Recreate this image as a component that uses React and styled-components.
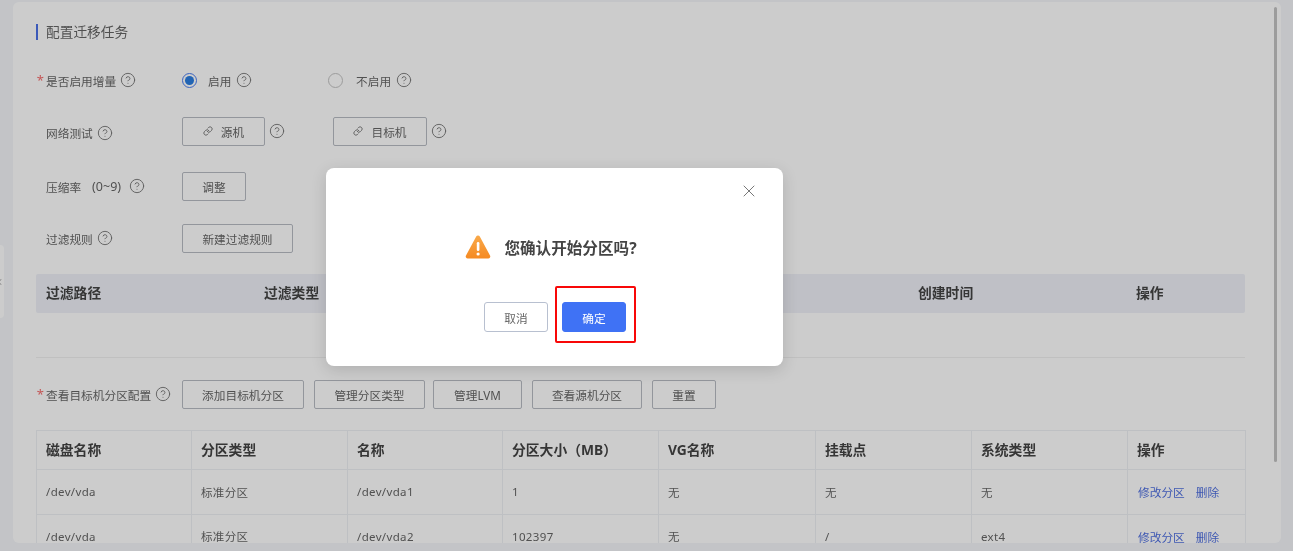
import React from "react";
import styled, { createGlobalStyle } from "styled-components";
import { CircleHelp, Link as LinkIcon, X, ChevronLeft } from "lucide-react";

const Global = createGlobalStyle`
  html, body { margin: 0; padding: 0; height: 100%; overflow: hidden; background: #f4f6f9; }
  body { font-family: "Noto Sans", "Noto Sans CJK SC", sans-serif; font-size: 11.7px; color: #666; }
  * { box-sizing: border-box; }
`;

const Page = styled.div`
  position: relative;
  width: 1293px;
  height: 551px;
  overflow: hidden;
  padding: 2px 12px 8px 13px;
  filter: blur(0.5px);
`;
const Card = styled.main`
  position: relative;
  height: 541px;
  background: #fff;
  border-radius: 6px;
  padding: 22px 36px 0 23px;
  overflow: hidden;
`;
const SideTab = styled.div`
  position: absolute;
  left: 0;
  top: 245px;
  width: 4px;
  height: 73px;
  background: #fff;
  border-radius: 0 4px 4px 0;
  display: flex;
  align-items: center;
  color: #444;
  overflow: hidden;
`;
const Scrollbar = styled.div`
  position: absolute;
  right: 4px;
  top: 5px;
  width: 3px;
  height: 455px;
  background: #c4c4c4;
  border-radius: 2px;
`;
const Title = styled.h2`
  margin: 0;
  height: 16px;
  line-height: 16px;
  font-size: 13.7px;
  font-weight: 400;
  color: #666;
  padding-left: 8px;
  border-left: 2px solid #4a70e8;
`;
const FormRow = styled.div`
  display: flex;
  align-items: center;
  height: 30px;
  margin-top: ${(p) => p.$top}px;
`;
const Label = styled.div`
  width: 146px;
  flex: none;
  display: flex;
  align-items: center;
  gap: 4px;
  padding-left: ${(p) => (p.$required ? 0 : 10)}px;
  padding-top: ${(p) => p.$shift || 0}px;
  color: #666;
  white-space: nowrap;
`;
const Star = styled.span`
  color: #f56c6c;
  width: 10px;
  margin-right: -4px;
  font-size: 13px;
  text-align: right;
  padding-right: 2px;
`;
const RangeHint = styled.span`
  margin: 0 4px 0 7px;
  font-size: 12.5px;
`;
const Help = styled(CircleHelp).attrs({ size: 16, strokeWidth: 1.4 })`
  color: #777;
  flex: none;
`;
const RadioItem = styled.label`
  display: flex;
  align-items: center;
  width: ${(p) => p.$width}px;
  gap: 5px;
  color: #666;
`;
const Radio = styled.span`
  width: 15px;
  height: 15px;
  border-radius: 50%;
  border: 1px solid ${(p) => (p.$on ? "#4a7df0" : "#c4c4c4")};
  display: inline-flex;
  align-items: center;
  justify-content: center;
  margin-right: ${(p) => (p.$on ? 6 : 8)}px;
  &::after {
    content: "";
    width: 9px;
    height: 9px;
    border-radius: 50%;
    background: ${(p) => (p.$on ? "#2a7de1" : "transparent")};
  }
`;
const Button = styled.button`
  width: ${(p) => p.$width}px;
  height: 29px;
  flex: none;
  margin-right: ${(p) => p.$gap || 0}px;
  border: 1px solid #b8bcc4;
  border-radius: 2px;
  background: #fff;
  color: #666;
  font: inherit;
  display: inline-flex;
  align-items: center;
  justify-content: center;
  gap: 8px;
  padding: 0;
`;
const HelpSlot = styled.span`
  display: inline-flex;
  margin: 0 ${(p) => p.$after || 0}px 0 4px;
`;
const FilterHead = styled.div`
  display: grid;
  grid-template-columns: repeat(5, 218px) 1fr;
  align-items: center;
  height: 39px;
  padding-bottom: 3px;
  margin-top: 21px;
  background: #eff1f8;
  border-radius: 2px;
  font-size: 13.8px;
  font-weight: 700;
  color: #444;
  span { padding-left: 10px; }
`;
const Divider = styled.hr`
  margin: 44px 0 0;
  border: 0;
  border-top: 1px solid #f0f0f0;
`;
const Table = styled.table`
  margin-top: 21px;
  width: 1209px;
  table-layout: fixed;
  border-collapse: collapse;
  th, td {
    border: 1px solid #eef0f4;
    padding: 0 0 0 9px;
    text-align: left;
    height: 44.5px;
  }
  th {
    height: 39px;
    padding: 0 0 2px 9px;
    font-size: 13.8px;
    font-weight: 700;
    color: #444;
  }
  td {
    color: #666;
    font-size: 11.5px;
    letter-spacing: 0.35px;
  }
  td:last-child { padding-left: 10px; letter-spacing: 0; font-size: 11.7px; }
`;
const TextLink = styled.a`
  color: #4f6fe0;
  margin-right: 11px;
`;

const Overlay = styled.div`
  position: absolute;
  inset: 0;
  background: rgba(0, 0, 0, 0.2);
`;
const Dialog = styled.div`
  position: absolute;
  left: 326px;
  top: 168px;
  width: 457px;
  height: 198px;
  background: #fff;
  border-radius: 8px;
  box-shadow: 0 4px 16px rgba(0, 0, 0, 0.14);
  display: flex;
  flex-direction: column;
  align-items: center;
`;
const Close = styled(X).attrs({ size: 20, strokeWidth: 1.2 })`
  position: absolute;
  right: 24px;
  top: 13px;
  color: #777;
`;
const Message = styled.div`
  display: flex;
  align-items: center;
  gap: 13px;
  margin: 66px 7px 0 0;
  height: 26px;
  font-size: 15.6px;
  font-weight: 700;
  color: #444;
`;
const Actions = styled.div`
  display: flex;
  gap: 14px;
  margin-top: 42px;
  margin-left: 1px;
`;
const DialogButton = styled.button`
  width: 64px;
  height: 30px;
  padding: 0;
  border-radius: 3px;
  font: inherit;
  border: 1px solid ${(p) => (p.$primary ? "#3f72f5" : "#b8c0d0")};
  background: ${(p) => (p.$primary ? "#3f72f5" : "#fff")};
  color: ${(p) => (p.$primary ? "#fff" : "#666")};
`;
const Annotation = styled.div`
  position: absolute;
  left: 555px;
  top: 286px;
  width: 81px;
  height: 57px;
  border: 2px solid #f80808;
  border-radius: 2px;
  pointer-events: none;
`;

const WarnIcon = () => (
  <svg width="26" height="24" viewBox="0 0 26 24">
    <defs>
      <linearGradient id="warn" x1="0" y1="0" x2="0" y2="1">
        <stop offset="0" stopColor="#f9a94a" />
        <stop offset="1" stopColor="#f58a22" />
      </linearGradient>
    </defs>
    <path d="M11.2 1.6 a2 2 0 0 1 3.6 0 L25 20.4 a2 2 0 0 1 -1.8 3 H2.8 a2 2 0 0 1 -1.8 -3 Z" fill="url(#warn)" />
    <rect x="11.8" y="7" width="2.6" height="9" rx="1.2" fill="#fff" />
    <circle cx="13.1" cy="19" r="1.6" fill="#fff" />
  </svg>
);

const columns = [155, 156, 155, 156, 157, 156, 156, 118];
const heads = ["磁盘名称", "分区类型", "名称", "分区大小（MB）", "VG名称", "挂载点", "系统类型", "操作"];
const rows = [
  ["/dev/vda", "标准分区", "/dev/vda1", "1", "无", "无", "无"],
  ["/dev/vda", "标准分区", "/dev/vda2", "102397", "无", "/", "ext4"],
];

export default function App() {
  return (
    <>
      <Global />
      <Page>
        <SideTab><ChevronLeft size={10} style={{ marginLeft: -5 }} /></SideTab>
        <Card>
          <Title>配置迁移任务</Title>
          <FormRow $top={25}>
            <Label $required><Star>*</Star>是否启用增量<Help /></Label>
            <RadioItem $width={146}><Radio $on />启用<Help /></RadioItem>
            <RadioItem><Radio />不启用<Help /></RadioItem>
          </FormRow>
          <FormRow $top={21}>
            <Label $shift={3}>网络测试<Help /></Label>
            <Button $width={83}><LinkIcon size={10} />源机</Button>
            <HelpSlot $after={48}><Help /></HelpSlot>
            <Button $width={94}><LinkIcon size={10} />目标机</Button>
            <HelpSlot><Help /></HelpSlot>
          </FormRow>
          <FormRow $top={25}>
            <Label>压缩率<RangeHint>(0~9)</RangeHint><Help /></Label>
            <Button $width={64}>调整</Button>
          </FormRow>
          <FormRow $top={22}>
            <Label>过滤规则<Help /></Label>
            <Button $width={111}>新建过滤规则</Button>
          </FormRow>
          <FilterHead>
            <span>过滤路径</span>
            <span>过滤类型</span>
            <span />
            <span />
            <span>创建时间</span>
            <span>操作</span>
          </FilterHead>
          <Divider />
          <FormRow $top={21}>
            <Label $required><Star>*</Star>查看目标机分区配置<Help /></Label>
            <Button $width={122} $gap={10}>添加目标机分区</Button>
            <Button $width={111} $gap={8}>管理分区类型</Button>
            <Button $width={89} $gap={10}>管理LVM</Button>
            <Button $width={110} $gap={10}>查看源机分区</Button>
            <Button $width={64}>重置</Button>
          </FormRow>
          <Table>
            <colgroup>
              {columns.map((w, i) => <col key={i} width={w} />)}
            </colgroup>
            <thead>
              <tr>{heads.map((h) => <th key={h}>{h}</th>)}</tr>
            </thead>
            <tbody>
              {rows.map((r) => (
                <tr key={r[2]}>
                  {r.map((c, i) => <td key={i}>{c}</td>)}
                  <td><TextLink>修改分区</TextLink><TextLink>删除</TextLink></td>
                </tr>
              ))}
            </tbody>
          </Table>
          <Scrollbar />
        </Card>
        <Overlay />
        <Dialog>
          <Close />
          <Message><WarnIcon />您确认开始分区吗?</Message>
          <Actions>
            <DialogButton>取消</DialogButton>
            <DialogButton $primary>确定</DialogButton>
          </Actions>
        </Dialog>
        <Annotation />
      </Page>
    </>
  );
}
